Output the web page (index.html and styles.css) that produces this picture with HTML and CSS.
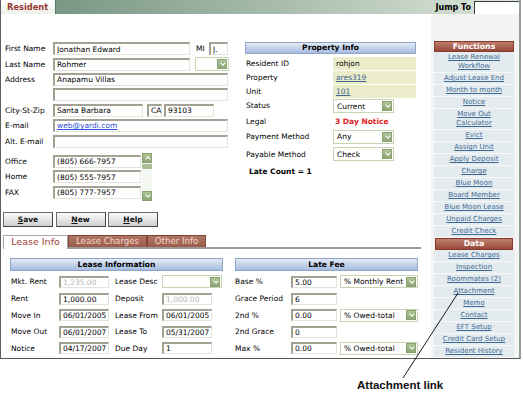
FILE: index.html
```html
<!DOCTYPE html>
<html lang="en">
<head>
    <meta charset="UTF-8">
    <meta name="viewport" content="width=device-width, initial-scale=1.0">
    <title>Resident</title>
    <link rel="stylesheet" href="styles.css">
</head>
<body>
    <div class="frame">
        <div class="topbar">
            <div class="page-tab">Resident</div>
            <div class="jump">
                <label for="jumpTo">Jump To</label>
                <input type="text" id="jumpTo" class="jump-input">
            </div>
        </div>

        <div class="content">
            <div class="main">
                <div class="upper">
                    <div class="person">
                        <div class="prow"><span class="lbl">First Name</span><input class="txt w137" value="Jonathan Edward"><span class="mi">MI</span><input class="txt w19" value="J."></div>
                        <div class="prow"><span class="lbl">Last Name</span><input class="txt w137" value="Rohmer"><div class="sel w34 ml5"><span></span><i class="sel-btn"></i></div></div>
                        <div class="prow"><span class="lbl">Address</span><input class="txt w175" value="Anapamu Villas"></div>
                        <div class="prow"><span class="lbl"></span><input class="txt w175" value=""></div>
                        <div class="prow"><span class="lbl">City-St-Zip</span><input class="txt w90" value="Santa Barbara"><input class="txt w15 ml4" value="CA"><input class="txt w50 ml2" value="93103"></div>
                        <div class="prow"><span class="lbl">E-mail</span><div class="txt w175"><a href="#" class="mail">web@yardi.com</a></div></div>
                        <div class="prow"><span class="lbl">Alt. E-mail</span><input class="txt w175" value=""></div>

                        <div class="phones">
                            <div class="phone-fields">
                                <div class="phrow"><span class="lbl">Office</span><input class="txt w88" value="(805) 666-7957"></div>
                                <div class="phrow"><span class="lbl">Home</span><input class="txt w88" value="(805) 555-7957"></div>
                                <div class="phrow"><span class="lbl">FAX</span><input class="txt w88" value="(805) 777-7957"></div>
                            </div>
                            <div class="spin">
                                <i class="spin-btn up"></i>
                                <i class="spin-thumb"></i>
                                <i class="spin-btn down"></i>
                            </div>
                        </div>
                    </div>

                    <div class="property">
                        <div class="bar-head">Property Info</div>
                        <div class="irow"><span class="ilbl">Resident ID</span><span class="ival">rohjon</span></div>
                        <div class="irow"><span class="ilbl">Property</span><span class="ival"><a href="#">ares319</a></span></div>
                        <div class="irow"><span class="ilbl">Unit</span><span class="ival"><a href="#">101</a></span></div>
                        <div class="irow status-row"><span class="ilbl">Status</span><div class="sel w61"><span>Current</span><i class="sel-btn"></i></div></div>
                        <div class="irow legal-row"><span class="ilbl">Legal</span><span class="legal">3 Day Notice</span></div>
                        <div class="irow pay-row"><span class="ilbl">Payment Method</span><div class="sel w61"><span>Any</span><i class="sel-btn"></i></div></div>
                        <div class="irow payable-row"><span class="ilbl">Payable Method</span><div class="sel w61"><span>Check</span><i class="sel-btn"></i></div></div>
                        <div class="late-count">Late Count = 1</div>
                    </div>
                </div>

                <div class="buttons">
                    <button><u>S</u>ave</button>
                    <button><u>N</u>ew</button>
                    <button><u>H</u>elp</button>
                </div>

                <div class="tabs">
                    <div class="tab active">Lease Info</div>
                    <div class="tab">Lease Charges</div>
                    <div class="tab">Other Info</div>
                </div>

                <div class="lease">
                    <div class="lease-info">
                        <div class="bar-head">Lease Information</div>
                        <div class="lrows">
                            <div class="lrow"><span class="llbl">Mkt. Rent</span><input class="txt w50 off" value="1,235.00"><span class="llbl2">Lease Desc</span><div class="sel w60"><span></span><i class="sel-btn"></i></div></div>
                            <div class="lrow"><span class="llbl">Rent</span><input class="txt w50" value="1,000.00"><span class="llbl2">Deposit</span><input class="txt w50 off" value="1,000.00"></div>
                            <div class="lrow"><span class="llbl">Move In</span><input class="txt w50" value="06/01/2005"><span class="llbl2">Lease From</span><input class="txt w50" value="06/01/2005"></div>
                            <div class="lrow"><span class="llbl">Move Out</span><input class="txt w50" value="06/01/2007"><span class="llbl2">Lease To</span><input class="txt w50" value="05/31/2007"></div>
                            <div class="lrow"><span class="llbl">Notice</span><input class="txt w50" value="04/17/2007"><span class="llbl2">Due Day</span><input class="txt w50" value="1"></div>
                        </div>
                    </div>

                    <div class="late-fee">
                        <div class="bar-head">Late Fee</div>
                        <div class="lrows">
                            <div class="lrow"><span class="flbl">Base %</span><input class="txt w46" value="5.00"><div class="sel w78 ml3"><span>% Monthly Rent</span><i class="sel-btn"></i></div></div>
                            <div class="lrow"><span class="flbl">Grace Period</span><input class="txt w46" value="6"></div>
                            <div class="lrow"><span class="flbl">2nd %</span><input class="txt w46" value="0.00"><div class="sel w78 ml3"><span>% Owed-total</span><i class="sel-btn"></i></div></div>
                            <div class="lrow"><span class="flbl">2nd Grace</span><input class="txt w46" value="0"></div>
                            <div class="lrow"><span class="flbl">Max %</span><input class="txt w46" value="0.00"><div class="sel w78 ml3"><span>% Owed-total</span><i class="sel-btn"></i></div></div>
                        </div>
                    </div>
                </div>
            </div>

            <div class="side">
                <div class="side-head">Functions</div>
                <ul class="side-links">
                    <li class="two"><a href="#">Lease Renewal<br>Workflow</a></li>
                    <li><a href="#">Adjust Lease End</a></li>
                    <li><a href="#">Month to month</a></li>
                    <li><a href="#">Notice</a></li>
                    <li class="two"><a href="#">Move Out<br>Calculator</a></li>
                    <li><a href="#">Evict</a></li>
                    <li><a href="#">Assign Unit</a></li>
                    <li><a href="#">Apply Deposit</a></li>
                    <li><a href="#">Charge</a></li>
                    <li><a href="#">Blue Moon</a></li>
                    <li><a href="#">Board Member</a></li>
                    <li><a href="#">Blue Moon Lease</a></li>
                    <li><a href="#">Unpaid Charges</a></li>
                    <li><a href="#">Credit Check</a></li>
                </ul>
                <div class="side-head data">Data</div>
                <ul class="side-links">
                    <li><a href="#">Lease Charges</a></li>
                    <li><a href="#">Inspection</a></li>
                    <li><a href="#">Roommates (2)</a></li>
                    <li><a href="#">Attachment</a></li>
                    <li><a href="#">Memo</a></li>
                    <li><a href="#">Contact</a></li>
                    <li><a href="#">EFT Setup</a></li>
                    <li><a href="#">Credit Card Setup</a></li>
                    <li><a href="#">Resident History</a></li>
                </ul>
            </div>
        </div>
    </div>

    <!-- callout pointing at the Attachment link -->
    <svg class="callout-line" width="523" height="403" viewBox="0 0 523 403">
        <line x1="458" y1="293" x2="403" y2="378" stroke="#000" stroke-width="0.9"/>
    </svg>
    <div class="callout">Attachment link</div>
</body>
</html>
```

FILE: styles.css
```css
body {
    margin: 0;
    font-family: "DejaVu Sans", Verdana, sans-serif;
    font-size: 7.5px;
    color: #000;
    background: #fff;
    position: relative;
    width: 523px;
    height: 403px;
    overflow: hidden;
}

a {
    color: #3a6690;
}

.frame {
    width: 518px;
    height: 358px;
    border-left: 1px solid #5e5e5e;
    border-right: 2px solid #8fa092;
    border-bottom: 1px solid #555;
}

/* top bar */
.topbar {
    display: flex;
    height: 14px;
    background: linear-gradient(to right, #6e8e7b 0, #9fb5a4 45%, #dde6da 100%);
}

.page-tab {
    width: 48px;
    padding-left: 6px;
    line-height: 14px;
    font-size: 8.3px;
    font-weight: bold;
    color: #9a3b33;
    background: linear-gradient(#ffffff, #eef2ea);
    border-right: 1px solid #587766;
}

.jump {
    margin-left: auto;
    display: flex;
    align-items: center;
}

.jump label {
    font-weight: bold;
    font-size: 8px;
    margin-right: 3px;
}

.jump-input {
    box-sizing: border-box;
    width: 45px;
    height: 13px;
    margin: 0;
    border: none;
    border-left: 1px solid #3c3c3c;
    border-top: 1px solid #3c3c3c;
    background: #fff;
}

.content {
    display: flex;
    height: 344px;
}

.main {
    width: 430px;
}

/* inputs */
.txt {
    box-sizing: border-box;
    height: 13px;
    margin: 0;
    padding: 0 0 0 2px;
    font-family: "DejaVu Sans", Verdana, sans-serif;
    font-size: 7.5px;
    line-height: 10px;
    color: #000;
    background: #fff;
    border-style: solid;
    border-width: 2px 1px 1px 2px;
    border-color: #a3a193 #e3e3db #e3e3db #a3a193;
    outline: none;
}

div.txt {
    white-space: nowrap;
}

.txt .mail {
    color: #2b4fd6;
}

.txt.off {
    color: #b4b4b4;
}

.w15 { width: 15px; }
.w19 { width: 19px; }
.w34 { width: 34px; }
.w46 { width: 46px; }
.w50 { width: 50px; }
.w60 { width: 60px; }
.w61 { width: 61px; }
.w78 { width: 78px; }
.w88 { width: 88px; }
.w90 { width: 90px; }
.w137 { width: 137px; }
.w175 { width: 175px; }
.ml2 { margin-left: 2px; }
.ml3 { margin-left: 3px; }
.ml4 { margin-left: 4px; }
.ml5 { margin-left: 5px; }

/* fake select */
.sel {
    box-sizing: border-box;
    height: 14px;
    display: flex;
    align-items: center;
    background: #fff;
    border: 1px solid #c5d4b3;
    padding-left: 3px;
    white-space: nowrap;
}

.sel span {
    flex: 1;
    overflow: hidden;
}

.sel-btn,
.spin-btn {
    position: relative;
    width: 10px;
    height: 10px;
    margin-right: 1px;
    background: linear-gradient(#aec496, #8ea677);
    border: 1px solid #8aa070;
    box-sizing: border-box;
}

.sel-btn::after,
.spin-btn::after {
    content: "";
    position: absolute;
    left: 2.5px;
    top: 1px;
    width: 3px;
    height: 3px;
    border-right: 1.5px solid #fff;
    border-bottom: 1.5px solid #fff;
    transform: rotate(45deg);
}

/* person form */
.upper {
    display: flex;
    padding: 27px 0 0 4px;
}

.person {
    width: 224px;
}

.prow {
    display: flex;
    align-items: center;
    height: 15.4px;
}

.lbl {
    width: 48px;
    flex-shrink: 0;
}

.mi {
    width: 13px;
    margin-left: 6px;
}

.phones {
    display: flex;
    margin-top: 4.2px;
}

.phone-fields {
    padding-top: 0.5px;
}

.phrow {
    display: flex;
    align-items: center;
    height: 15.5px;
}

.spin {
    width: 10px;
    height: 48px;
    margin-left: 1px;
    display: flex;
    flex-direction: column;
    background: #f4f6f2;
}

.spin .spin-btn {
    margin: 0;
}

.spin .up::after {
    top: 3px;
    transform: rotate(-135deg);
}

.spin-thumb {
    height: 5px;
    margin: 1px 0;
    background: #a9bd94;
    border-radius: 1px;
}

.spin .down {
    margin-top: auto;
}

/* property info */
.property {
    width: 171px;
    margin-left: 16px;
    padding-top: 1px;
}

.bar-head {
    box-sizing: border-box;
    height: 13px;
    line-height: 11px;
    text-align: center;
    font-weight: bold;
    font-size: 7.6px;
    background: linear-gradient(#e4ebf6, #a6bcdf);
    border: 1px solid #8ea5c7;
}

.property .bar-head {
    height: 12px;
    line-height: 10px;
    margin-bottom: 3px;
}

.irow {
    display: flex;
    align-items: flex-start;
    height: 14px;
}

.ilbl {
    width: 87px;
    padding-left: 1px;
    line-height: 13px;
    flex-shrink: 0;
}

.ival {
    width: 80px;
    height: 13px;
    padding-left: 3px;
    line-height: 13px;
    background: #ebecca;
}

.status-row {
    height: 15px;
}

.legal {
    color: #e32222;
    font-weight: bold;
    padding-left: 2px;
}

.pay-row,
.payable-row,
.legal-row {
    align-items: center;
}

.pay-row {
    height: 17px;
}

.payable-row {
    height: 18px;
}

.late-count {
    height: 18px;
    line-height: 18px;
    padding-left: 4px;
    font-weight: bold;
}

/* buttons */
.buttons {
    display: flex;
    gap: 2.5px;
    margin-top: 11px;
    padding-left: 2px;
}

button {
    width: 50px;
    height: 15px;
    padding: 0;
    font-family: "DejaVu Sans", Verdana, sans-serif;
    font-size: 7.5px;
    font-weight: bold;
    color: #111;
    background: linear-gradient(#fbfbfb, #cfcfcf);
    border: 1px solid #6c6c6c;
    border-right-color: #444;
    border-bottom-color: #444;
}

/* tabs */
.tabs {
    display: flex;
    width: 418px;
    height: 12px;
    margin: 8px 0 0 2px;
    border-bottom: 2px solid #9a9a9a;
}

.tab {
    box-sizing: border-box;
    height: 12px;
    padding: 0;
    line-height: 11px;
    text-align: center;
    white-space: nowrap;
    font-size: 8.6px;
    color: #f2d8d0;
    background: linear-gradient(#b27564, #9c5c4c);
    border: 1px solid #7c4638;
    border-bottom: none;
}

.tab.active {
    width: 65px;
    height: 14px;
    line-height: 12px;
    font-size: 9.5px;
    color: #a33f33;
    background: #fff;
    border-color: #a8a8a8;
    margin-bottom: -2px;
}

.tab:nth-child(2) { width: 79px; }
.tab:nth-child(3) { width: 59px; }

/* lease section */
.lease {
    display: flex;
    margin-top: 9px;
    padding-left: 9px;
}

.lease-info {
    width: 213px;
}

.late-fee {
    width: 183px;
    margin-left: 12px;
}

.lrows {
    margin-top: 2.7px;
}

.lrow {
    display: flex;
    align-items: center;
    height: 16.6px;
}

.lrow .txt {
    height: 12px;
    line-height: 9px;
}

.lrow .sel {
    height: 13px;
}

.llbl {
    width: 48px;
    padding-left: 1px;
    flex-shrink: 0;
}

.llbl2 {
    width: 47px;
    margin-left: 6px;
    flex-shrink: 0;
}

.flbl {
    width: 56px;
    flex-shrink: 0;
}

/* sidebar */
.side {
    width: 80px;
    padding: 27px 5px 0 3px;
    background: #f3f4f3;
}

.side-head {
    box-sizing: border-box;
    height: 11px;
    line-height: 9px;
    text-align: center;
    font-weight: bold;
    font-size: 7.8px;
    color: #fff;
    background: linear-gradient(#c07e6e, #98493a);
    border: 1px solid #86392b;
}

.side-head.data {
    height: 12px;
    line-height: 10px;
    width: 78px;
    margin-left: 1px;
}

.side-links {
    list-style: none;
    margin: 0;
    padding: 0;
}

.side-links li {
    box-sizing: border-box;
    height: 12px;
    line-height: 11px;
    text-align: center;
    font-size: 7px;
    background: #e4ebee;
    border-bottom: 1px solid #f8fafa;
}

.side-links li.two {
    height: 21px;
    line-height: 9.3px;
    padding-top: 0.5px;
}

.side-links a {
    color: #3c6a96;
}

/* annotation */
.callout-line {
    position: absolute;
    left: 0;
    top: 0;
    pointer-events: none;
}

.callout {
    position: absolute;
    left: 357px;
    top: 379px;
    font-family: "Liberation Sans", Arial, sans-serif;
    font-size: 11.5px;
    font-weight: bold;
    color: #111;
}
```
